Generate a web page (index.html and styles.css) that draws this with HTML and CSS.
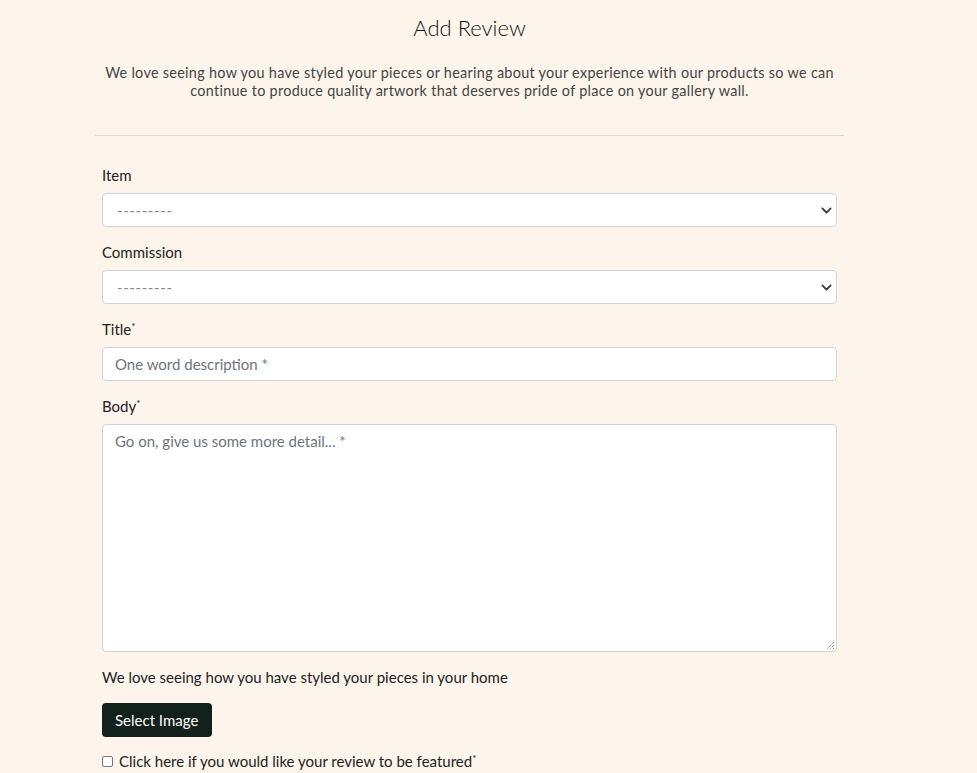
FILE: index.html
```html
<!DOCTYPE html>
<html>
<head>
<meta charset="utf-8">
<link rel="stylesheet" href="styles.css">
</head>
<body>
<main class="wrap">
  <h1 class="title">Add Review</h1>
  <p class="intro">We love seeing how you have styled your pieces or hearing about your experience with our products so we can continue to produce quality artwork that deserves pride of place on your gallery wall.</p>
  <hr class="rule">
  <form class="form">
    <div class="field">
      <label class="label">Item</label>
      <div class="select"><span class="dash">---------</span>
        <svg class="chev" width="11" height="11" viewBox="0 0 16 16"><path d="M2 5l6 6 6-6" fill="none" stroke="#343a40" stroke-width="2.6" stroke-linecap="round" stroke-linejoin="round"/></svg>
      </div>
    </div>
    <div class="field">
      <label class="label">Commission</label>
      <div class="select"><span class="dash">---------</span>
        <svg class="chev" width="11" height="11" viewBox="0 0 16 16"><path d="M2 5l6 6 6-6" fill="none" stroke="#343a40" stroke-width="2.6" stroke-linecap="round" stroke-linejoin="round"/></svg>
      </div>
    </div>
    <div class="field">
      <label class="label">Title<sup class="ast">*</sup></label>
      <div class="input"><span class="ph">One word description *</span></div>
    </div>
    <div class="field">
      <label class="label">Body<sup class="ast">*</sup></label>
      <div class="textarea"><span class="ph">Go on, give us some more detail... *</span>
        <svg class="grip" width="9" height="9" viewBox="0 0 9 9"><path d="M8 1L1 8M8 4L4 8M8 7L7 8" stroke="#555" stroke-width="1" stroke-dasharray="1 1"/></svg>
      </div>
    </div>
    <p class="note">We love seeing how you have styled your pieces in your home</p>
    <div class="btn">Select Image</div>
    <div class="check"><span class="box"></span><span>Click here if you would like your review to be featured<sup class="ast">*</sup></span></div>
  </form>
</main>
</body>
</html>
```
FILE: styles.css
```css
* { box-sizing: border-box; }
body {
  margin: 0;
  background: #fdf5ec;
  font-family: "Lato", "Open Sans", sans-serif;
  color: #212529;
  height: 773px;
  overflow: hidden;
}
.wrap {
  width: 749px;
  margin-left: 95px;
  padding-top: 14px;
}
.title {
  margin: 0;
  text-align: center;
  font-weight: 300;
  font-size: 22px;
  line-height: 28px;
  color: #111;
}
.intro {
  margin: 22px 0 0;
  text-align: center;
  font-size: 14.4px;
  letter-spacing: 0.3px;
  line-height: 18px;
  color: #444;
  font-weight: 400;
}
.rule {
  margin: 35px 0 0;
  border: 0;
  border-top: 1px solid #ddd9d3;
}
.form {
  padding: 0 7px;
  margin-top: 29px;
}
.field { margin-bottom: 15px; }
.label {
  display: block;
  font-size: 15px;
  line-height: 20px;
  margin-bottom: 8px;
  color: #222;
}
.ast { font-size: 10px; vertical-align: top; line-height: 10px; position: relative; top: 2px; }
.select, .input {
  height: 34px;
  background: #fff;
  border: 1px solid #ced4da;
  border-radius: 4px;
  display: flex;
  align-items: center;
  padding: 0 12px;
  font-size: 15px;
}
.select { justify-content: space-between; padding-right: 4px; padding-left: 14px; }
.dash { color: #888; letter-spacing: 0.6px; }
.ph { color: #6c757d; }
.textarea {
  height: 228px;
  margin-top: 1px;
  background: #fff;
  border: 1px solid #ced4da;
  border-radius: 4px;
  padding: 5px 12px;
  font-size: 15px;
  line-height: 22px;
  position: relative;
}
.grip { position: absolute; right: 1px; bottom: 1px; }
.note {
  margin: 15px 0 0;
  font-size: 15px;
  line-height: 20px;
  color: #222;
}
.btn {
  display: inline-block;
  margin-top: 16px;
  height: 34px;
  line-height: 34px;
  padding: 0 14px 0 13px;
  background: #12211b;
  color: #fff;
  border-radius: 4px;
  font-size: 15px;
}
.check {
  display: flex;
  align-items: center;
  gap: 6px;
  margin-top: 14px;
  font-size: 15px;
  line-height: 20px;
  color: #222;
}
.box {
  width: 11px; height: 11px;
  border: 1px solid #767676;
  border-radius: 2px;
  background: #fff;
}
```
